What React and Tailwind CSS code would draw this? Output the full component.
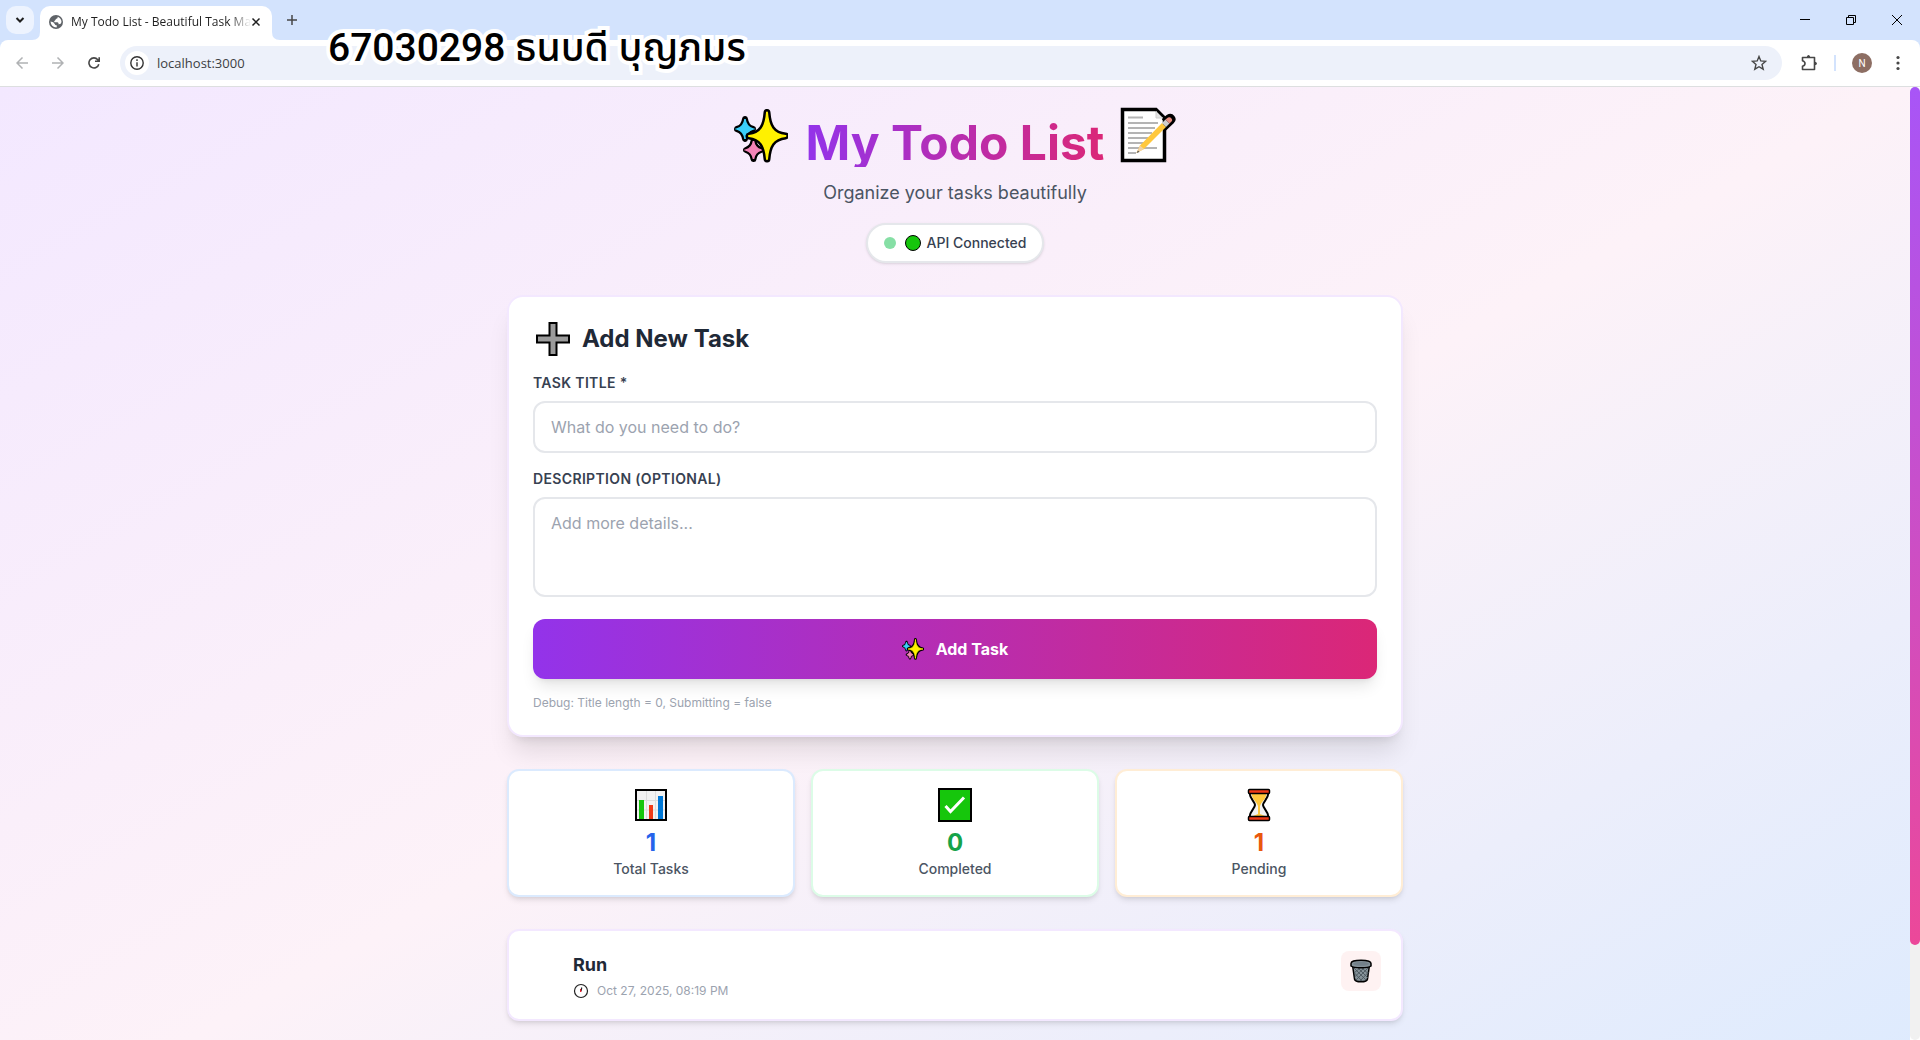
import React from "react";

function Sparkles({ className }) {
  return (
    <svg viewBox="0 0 54 54" className={className} aria-hidden="true">
      <g fill="#000" stroke="#000" strokeWidth="6" strokeLinejoin="round">
        <path d="M11 10 Q12 18 19 20 Q12 22 11 30 Q10 22 3 20 Q10 18 11 10Z" />
        <path d="M19.500 32 Q20.500 39 27 41 Q20.500 43 19.500 50 Q18.500 43 12 41 Q18.500 39 19.500 32Z" />
      </g>
      <path d="M11 10 Q12 18 19 20 Q12 22 11 30 Q10 22 3 20 Q10 18 11 10Z" fill="#3bd0fa" stroke="#3bd0fa" strokeWidth="1.500" />
      <path d="M19.500 32 Q20.500 39 27 41 Q20.500 43 19.500 50 Q18.500 43 12 41 Q18.500 39 19.500 32Z" fill="#f584b8" stroke="#f584b8" strokeWidth="1.500" />
      <path d="M33 3.500 C34 17 38 25.500 51.500 27 C38 28.500 34 37 33 50 C32 37 28 28.500 15 27 C28 25.500 32 17 33 3.500Z" fill="#fff100" stroke="#000" strokeWidth="7" strokeLinejoin="round" />
      <path d="M33 3.500 C34 17 38 25.500 51.500 27 C38 28.500 34 37 33 50 C32 37 28 28.500 15 27 C28 25.500 32 17 33 3.500Z" fill="#fff100" stroke="#fff100" strokeWidth="2" strokeLinejoin="round" />
    </svg>
  );
}

function Memo({ className }) {
  return (
    <svg viewBox="0 0 56 56" className={className} aria-hidden="true">
      <path d="M2.500 2.500H36L44.500 11V53.500H2.500Z" fill="#fff" stroke="#000" strokeWidth="3.500" />
      <path d="M36 4V11H43" fill="#e3e3e3" stroke="#cfcfcf" />
      <path d="M8 10.500H23M8 16H38M8 21H35M8 26H32M8 31H28M8 36H24M8 41H37M8 46H16" stroke="#b4b4b4" strokeWidth="2" />
      <path d="M43 13.500L47.500 9.500Q51 7.500 53 10T52.500 15L44 23" fill="#000" stroke="#000" strokeWidth="3.500" strokeLinejoin="round" />
      <path d="M16.500 46L20 38.500L42 16L46 20L24 42Z" fill="#ffc83d" />
      <path d="M16.500 46L20 38.500L24 42Z" fill="#f2d3a5" />
      <path d="M16.500 46L18 43.500L19.500 45Z" fill="#555" />
      <path d="M42 16L45.500 12.500L49.500 16.500L46 20Z" fill="#ccc" />
      <path d="M45.500 12.500L48 10.500Q50 9.500 51.500 11.500T51 15L49.500 16.500Z" fill="#e98f82" />
    </svg>
  );
}

function HeavyPlus({ className }) {
  return (
    <svg viewBox="0 0 34 34" className={className} aria-hidden="true">
      <path d="M13.500 1H20.500V13.500H33V20.500H20.500V33H13.500V20.500H1V13.500H13.500Z" fill="#9b9b9b" stroke="#000" strokeWidth="2" />
    </svg>
  );
}

function BarChart({ className }) {
  return (
    <svg viewBox="0 0 32 32" className={className} aria-hidden="true">
      <rect x="1" y="1" width="30" height="30" fill="#f2f2f2" stroke="#000" strokeWidth="2" />
      <path d="M11.500 2V30M20.500 2V30M2 11.500H30M2 21H30" stroke="#dcdcdc" />
      <rect x="4" y="11" width="5" height="19" fill="#16c60c" />
      <rect x="14" y="16" width="4" height="14" fill="#f03a17" />
      <rect x="23" y="7" width="5" height="23" fill="#0078d7" />
    </svg>
  );
}

function CheckMark({ className }) {
  return (
    <svg viewBox="0 0 34 34" className={className} aria-hidden="true">
      <rect x="1" y="1" width="32" height="32" fill="#16c60c" stroke="#000" strokeWidth="2" />
      <path d="M7.500 18L12.500 23.500L26 9.500" fill="none" stroke="#fff" strokeWidth="3" />
    </svg>
  );
}

function Hourglass({ className }) {
  return (
    <svg viewBox="0 0 24 34" className={className} aria-hidden="true">
      <path d="M2.500 5C3 11 8 14 8 17S3 23 2.500 29H21.500C21 23 16 20 16 17S21 11 21.500 5Z" fill="#f2f2f2" stroke="#000" strokeWidth="2" />
      <path d="M4.500 6H19.500C18.500 12 14.500 13.500 13 18V26L18 28H6L11 26V18C9.500 13.500 5.500 12 4.500 6Z" fill="#ffc83d" />
      <rect x="1.500" y="1.500" width="21" height="4" rx="1" fill="#f03a17" stroke="#000" strokeWidth="1.500" />
      <rect x="1.500" y="28.500" width="21" height="4" rx="1" fill="#f03a17" stroke="#000" strokeWidth="1.500" />
    </svg>
  );
}

function Clock({ className }) {
  return (
    <svg viewBox="0 0 16 16" className={className} aria-hidden="true">
      <circle cx="8" cy="8" r="6.500" fill="#fff" stroke="#222" strokeWidth="1.200" />
      <path d="M8 8L8.800 4.500" stroke="#222" strokeWidth="1.200" />
      <path d="M7.500 8.500V6" stroke="#e81224" />
      <circle cx="7.800" cy="8.200" r="0.800" fill="#e81224" />
    </svg>
  );
}

function Trash({ className }) {
  return (
    <svg viewBox="0 0 22 24" className={className} aria-hidden="true">
      <path d="M2.500 6L4.500 20Q5 22.800 11 22.800T17.500 20L19.500 6Z" fill="#859299" stroke="#000" strokeWidth="1.500" />
      <path d="M4 9L16 21M8 9L18 19M12 9L18.500 15M4.500 14L12 22M18 9L6 21M14 9L4.500 18M10 9L4 14M18.500 13L10 22" stroke="#4b575e" strokeWidth="0.900" />
      <path d="M1 4.500Q1 1.200 11 1.200T21 4.500V7Q19 8.800 11 8.800T1 7Z" fill="#859299" stroke="#000" strokeWidth="1.500" />
      <ellipse cx="11" cy="4.800" rx="8" ry="2" fill="#73818a" />
    </svg>
  );
}

function Globe({ className }) {
  return (
    <svg viewBox="0 0 14 14" className={className} aria-hidden="true">
      <circle cx="7" cy="7" r="7" fill="#5f6368" />
      <path d="M8.800 1.700Q9 3.800 7 4L6 5.500Q4.500 6 5.500 7.200H8.500Q10 7.500 9.500 9.300Q12.200 9.500 12.500 7Q12.500 3.500 8.800 1.700Z" fill="#fff" />
      <path d="M1.500 6.500Q5 7 5.500 8.800T8 10.500L7.500 12.500Q2 12 1.500 6.500Z" fill="#fff" />
    </svg>
  );
}

function TabStrip() {
  return (
    <div className="flex h-10 items-stretch bg-[#d3e3fd] pl-1.5">
      <button aria-label="Search tabs" className="mt-1.5 flex size-7 items-center justify-center rounded-[10px] bg-[#edf3fe]">
        <svg viewBox="0 0 10 10" className="size-2.5" fill="none" stroke="#1f1f1f" strokeWidth="2" aria-hidden="true">
          <path d="M1.500 3L5 6.500L8.500 3" />
        </svg>
      </button>
      <div className="relative mt-1.5 ml-1.5 flex w-58 items-center rounded-t-[10px] bg-white pr-[11px] pl-[9px]">
        <svg viewBox="0 0 8 8" className="absolute bottom-0 -left-2 size-2" fill="#fff" aria-hidden="true"><path d="M8 0V8H0Q8 8 8 0Z" /></svg>
        <svg viewBox="0 0 8 8" className="absolute -right-2 bottom-0 size-2" fill="#fff" aria-hidden="true"><path d="M0 0V8H8Q0 8 0 0Z" /></svg>
        <Globe className="mb-0.5 size-3.5 shrink-0" />
        <span className="mb-0.5 ml-2 bg-[linear-gradient(to_right,#1f1f1f_88%,transparent)] bg-clip-text font-['Open_Sans',sans-serif] text-[12px] leading-5 whitespace-nowrap text-transparent">
          My Todo List - Beautiful Task Ma
        </span>
        <button aria-label="Close tab" className="mb-0.5 ml-auto">
          <svg viewBox="0 0 10 10" className="size-2.5" stroke="#1f1f1f" strokeWidth="1.500" aria-hidden="true"><path d="M1.500 1.500L8.500 8.500M8.500 1.500L1.500 8.500" /></svg>
        </button>
      </div>
      <button aria-label="New tab" className="ml-[13px] px-0.5">
        <svg viewBox="0 0 10 10" className="size-2.5" stroke="#474747" strokeWidth="1.500" aria-hidden="true"><path d="M5 0V10M0 5H10" /></svg>
      </button>
      <div className="ml-auto flex items-center gap-9 pr-4.5">
        <button aria-label="Minimize"><svg viewBox="0 0 10 10" className="size-2.5" stroke="#000" aria-hidden="true"><path d="M0 4.500H10" /></svg></button>
        <button aria-label="Restore"><svg viewBox="0 0 10 10" className="size-2.5" fill="none" stroke="#000" aria-hidden="true"><path d="M0.500 2.500H7.500V9.500H0.500ZM2.500 2.500V0.500H9.500V7.500H7.500" /></svg></button>
        <button aria-label="Close window"><svg viewBox="0 0 10 10" className="size-2.5" fill="none" stroke="#000" aria-hidden="true"><path d="M0 0L10 10M10 0L0 10" /></svg></button>
      </div>
    </div>
  );
}

function Toolbar() {
  return (
    <div className="bg-[#d3e3fd]">
      <div className="flex h-[47px] items-center rounded-t-lg border-b border-[#dddfe0] bg-white pl-4">
        <button aria-label="Back" className="mr-6"><svg viewBox="0 0 12 12" className="size-3" fill="none" stroke="#b0b2b4" strokeWidth="1.500" aria-hidden="true"><path d="M12 6H1M6.500 0.500L1 6L6.500 11.500" /></svg></button>
        <button aria-label="Forward" className="mr-6"><svg viewBox="0 0 12 12" className="size-3" fill="none" stroke="#b0b2b4" strokeWidth="1.500" aria-hidden="true"><path d="M0 6H11M5.500 0.500L11 6L5.500 11.500" /></svg></button>
        <button aria-label="Reload"><svg viewBox="0 0 12 12" className="size-3" fill="none" stroke="#474747" strokeWidth="1.600" aria-hidden="true"><path d="M10.800 7.200A5 5 0 1 1 9.800 2.700L11 4M11.200 0.300V4.300H7" /></svg></button>
        <div className="ml-5 flex h-[34px] flex-1 items-center rounded-full bg-[#edf1fa] px-[5px]">
          <button aria-label="Site information" className="flex size-6 items-center justify-center rounded-full bg-white">
            <svg viewBox="0 0 14 14" className="size-3.5" fill="none" stroke="#333" strokeWidth="1.400" aria-hidden="true"><circle cx="7" cy="7" r="6.200" /><path d="M7 6.200V10.500M7 3.300V4.900" /></svg>
          </button>
          <input aria-label="Address" defaultValue="localhost:3000" className="ml-2 h-6 flex-1 bg-transparent font-['Open_Sans',sans-serif] text-[13px] text-[#3c4043] outline-none" />
          <button aria-label="Bookmark this tab" className="mr-2.5">
            <svg viewBox="0 0 16 16" className="size-4" fill="none" stroke="#474747" strokeWidth="1.400" aria-hidden="true"><path d="M8 1.500L9.800 5.900L14.700 6.300L11 9.500L12.200 14.200L8 11.700L3.800 14.200L5 9.500L1.300 6.300L6.200 5.900Z" /></svg>
          </button>
        </div>
        <button aria-label="Extensions" className="ml-4.5">
          <svg viewBox="0 0 18 18" className="size-[18px]" fill="none" stroke="#474747" strokeWidth="1.600" strokeLinejoin="round" aria-hidden="true">
            <path d="M2.500 3.500H14.500V15.500H2.500V12.300Q5 11.500 5 9.500T2.500 6.700Z" />
            <path d="M7 3Q7.500 1.500 8.500 1.500T10 3ZM15 8Q16.500 8.500 16.500 9.500T15 11Z" fill="#474747" stroke="none" />
            <path d="M7.500 3Q8.500 0.800 9.500 3M15 8.500Q17.200 9.500 15 10.500" />
          </svg>
        </button>
        <span className="ml-4 h-4 w-0.5 bg-[#d3e3fd]" />
        <button aria-label="Profile" className="ml-4 flex size-5 items-center justify-center rounded-full bg-[#8d6e63] font-[Roboto,sans-serif] text-[10px] text-white">N</button>
        <button aria-label="Menu" className="mr-5 ml-6">
          <svg viewBox="0 0 4 16" className="h-4 w-1" fill="#474747" aria-hidden="true"><circle cx="2" cy="2.500" r="1.600" /><circle cx="2" cy="8" r="1.600" /><circle cx="2" cy="13.500" r="1.600" /></svg>
        </button>
      </div>
    </div>
  );
}

function StatCard({ icon, value, label, border, color }) {
  return (
    <div className={`flex flex-col items-center rounded-xl border-2 bg-white p-4 shadow-md ${border}`}>
      <div className="flex h-9 items-center">{icon}</div>
      <div className={`mt-1 text-2xl leading-8 font-bold ${color}`}>{value}</div>
      <div className="text-sm font-medium text-[#4b5563]">{label}</div>
    </div>
  );
}

const labelClass = "block text-sm font-semibold tracking-wide text-[#374151] uppercase";
const fieldClass = "mt-2 block w-full rounded-xl border-2 border-[#e5e7eb] bg-white px-4 py-3 text-base leading-6 outline-none placeholder:text-[#9ca3af]";

export default function App() {
  return (
    <div className="relative flex h-screen flex-col overflow-hidden font-[Inter,sans-serif]">
      <TabStrip />
      <Toolbar />
      <div className="absolute top-5 left-82 font-[Roboto,'Noto_Sans_Thai',sans-serif] text-[39px] leading-14 font-medium whitespace-nowrap text-black [-webkit-text-stroke:8px_white] [paint-order:stroke_fill] [stroke-linejoin:round]">
        67030298 ธนบดี บุญภมร
      </div>
      <div className="flex min-h-0 flex-1">
        <div className="min-w-0 flex-1 overflow-hidden">
          <main className="bg-[linear-gradient(to_bottom_right,#f3e8ff,#fdf2f8,#dbeafe)] px-4 pt-8 pb-31">
            <div className="mx-auto max-w-4xl">
              <header className="flex flex-col items-center">
                <h1 className="flex h-12 items-center justify-center gap-4 text-5xl leading-none font-bold">
                  <Sparkles className="mr-0.5 mb-3.5 size-[54px]" />
                  <span className="bg-[linear-gradient(to_right,#9333ea,#db2777)] bg-clip-text text-transparent">My Todo List</span>
                  <Memo className="mb-4 size-14" />
                </h1>
                <p className="mt-3 text-lg leading-7 text-[#4b5563]">Organize your tasks beautifully</p>
                <div className="mt-4 flex items-center rounded-full border-2 border-[#e5e7eb] bg-white px-4 py-2 text-sm font-medium text-[#374151] shadow-sm">
                  <span className="size-3 rounded-full bg-[#86dfa5]" />
                  <span className="mr-1.5 ml-[9px] size-4 rounded-full border border-black bg-[#16c60c]" />
                  API Connected
                </div>
              </header>

              <form className="mt-8 rounded-2xl border-2 border-[#f3e8ff] bg-white p-6 shadow-xl" onSubmit={(e) => e.preventDefault()}>
                <h2 className="flex h-9 items-center gap-3 pl-[3px] text-2xl font-bold text-[#1f2937]">
                  <HeavyPlus className="size-[34px]" />
                  Add New Task
                </h2>
                <label htmlFor="title" className={`mt-4 ${labelClass}`}>Task Title *</label>
                <input id="title" type="text" placeholder="What do you need to do?" className={fieldClass} />
                <label htmlFor="description" className={`mt-4 ${labelClass}`}>Description (Optional)</label>
                <textarea id="description" rows={3} placeholder="Add more details..." className={`resize-none ${fieldClass}`} />
                <button className="mt-[22px] flex w-full items-center justify-center gap-3 rounded-xl bg-[linear-gradient(to_right,#9333ea,#db2777)] py-[18px] text-base leading-6 font-bold text-white shadow-lg">
                  <Sparkles className="size-[22px]" />
                  Add Task
                </button>
                <p className="mt-4 text-xs leading-4 text-[#9ca3af]">Debug: Title length = 0, Submitting = false</p>
              </form>

              <section className="mt-8 grid grid-cols-3 gap-4">
                <StatCard icon={<BarChart className="size-8" />} value="1" label="Total Tasks" border="border-[#dbeafe]" color="text-[#2563eb]" />
                <StatCard icon={<CheckMark className="size-[34px]" />} value="0" label="Completed" border="border-[#dcfce7]" color="text-[#16a34a]" />
                <StatCard icon={<Hourglass className="h-[34px] w-6" />} value="1" label="Pending" border="border-[#ffedd5]" color="text-[#ea580c]" />
              </section>

              <article className="mt-8 flex items-start gap-4 rounded-xl border-2 border-[#f3e8ff] bg-white p-5 shadow-md">
                <input type="checkbox" aria-label="Mark Run as done" className="size-7 shrink-0 appearance-none" />
                <div className="min-w-0 flex-1">
                  <h3 className="text-lg leading-7 font-bold text-[#1f2937]">Run</h3>
                  <p className="mt-1 flex items-center gap-2 text-xs leading-4 text-[#9ca3af]">
                    <Clock className="size-4" />
                    Oct 27, 2025, 08:19 PM
                  </p>
                </div>
                <button type="button" aria-label="Delete task" className="flex size-10 items-center justify-center rounded-lg bg-[#fef2f2]">
                  <Trash className="h-6 w-[22px]" />
                </button>
              </article>
            </div>
          </main>
        </div>
        <div className="w-2.5 rounded-full bg-[#f1f1f1]" aria-hidden="true">
          <div className="h-9/10 rounded-full bg-[linear-gradient(to_bottom,#a855f7,#ec4899)]" />
        </div>
      </div>
    </div>
  );
}
